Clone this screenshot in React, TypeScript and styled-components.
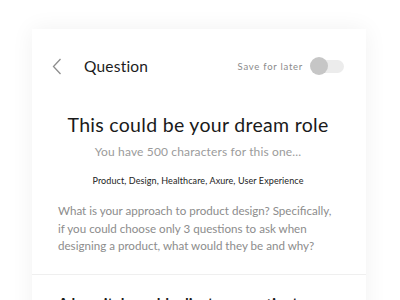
import React, { useState } from 'react';
import styled, { createGlobalStyle } from 'styled-components';

const GlobalStyle = createGlobalStyle`
    body {
        margin: 0;
        background: #ffffff;
        font-family: 'Lato', 'Liberation Sans', sans-serif;
        -webkit-font-smoothing: antialiased;
    }
`;

const Page = styled.div`
    box-sizing: border-box;
    height: 300px;
    overflow: hidden;
    padding: 29px 34px 0 32px;
`;

const Card = styled.div`
    background: #ffffff;
    box-shadow: 0 0 22px rgba(0, 0, 0, 0.06);
    min-height: 320px;
`;

const Header = styled.div`
    align-items: center;
    display: flex;
    height: 22px;
    padding: 26px 22px 0 20px;
`;

const BackButton = styled.button`
    background: transparent;
    border: none;
    cursor: pointer;
    display: flex;
    margin: 0 22px 0 0;
    padding: 0;
`;

const HeaderTitle = styled.h1`
    color: #1c1c1c;
    flex: 1;
    font-size: 15.5px;
    font-weight: 400;
    letter-spacing: 0.2px;
    margin: 0;
`;

const SaveLabel = styled.span`
    color: #8a8a8a;
    font-size: 9.5px;
    letter-spacing: 0.75px;
    margin-right: 7px;
`;

const Switch = styled.button<{ on: boolean }>`
    background: transparent;
    border: none;
    cursor: pointer;
    height: 18px;
    padding: 0;
    position: relative;
    width: 34px;

    &::before {
        background: #ececec;
        border-radius: 7px;
        content: '';
        height: 13px;
        left: 3px;
        position: absolute;
        right: 0;
        top: 2.5px;
    }

    &::after {
        background: ${(p) => (p.on ? '#4caf50' : '#c6c6c6')};
        border-radius: 50%;
        content: '';
        height: 18px;
        left: ${(p) => (p.on ? '16px' : '0')};
        position: absolute;
        top: 0;
        width: 18px;
    }
`;

const Body = styled.div`
    padding: 35px 28px 19px 26px;
    border-bottom: 1px solid #efefef;
`;

const Title = styled.h2`
    color: #1a1a1a;
    font-size: 19.5px;
    font-weight: 400;
    letter-spacing: 0.3px;
    line-height: 26px;
    margin: 0;
    text-align: center;
`;

const Hint = styled.p`
    color: #9b9b9b;
    font-size: 12px;
    letter-spacing: 0.15px;
    line-height: 16px;
    margin: 6px 0 0;
    text-align: center;
`;

const Tags = styled.p`
    color: #222222;
    font-size: 9px;
    letter-spacing: 0.1px;
    line-height: 12px;
    margin: 15px 0 0;
    text-align: center;
`;

const Prompt = styled.p`
    color: #8c8c8c;
    font-size: 11.6px;
    line-height: 17.5px;
    margin: 15px 0 0;
`;

const Next = styled.div`
    padding: 19px 26px;
`;

const NextTitle = styled.h3`
    color: #1a1a1a;
    font-size: 15px;
    font-weight: 700;
    margin: 0;
`;

export default function App() {
    const [saved, setSaved] = useState(false);
    return (
        <Page>
            <GlobalStyle />
            <Card>
                <Header>
                    <BackButton aria-label="Back">
                        <svg width="10" height="17" viewBox="0 0 10 17" fill="none">
                            <path d="M8.5 1 L1.5 8.5 L8.5 16" stroke="#8e8e8e" strokeWidth="1.3" />
                        </svg>
                    </BackButton>
                    <HeaderTitle>Question</HeaderTitle>
                    <SaveLabel>Save for later</SaveLabel>
                    <Switch on={saved} onClick={() => setSaved(!saved)} aria-label="Save for later" />
                </Header>
                <Body>
                    <Title>This could be your dream role</Title>
                    <Hint>You have 500 characters for this one...</Hint>
                    <Tags>Product, Design, Healthcare, Axure, User Experience</Tags>
                    <Prompt>
                        What is your approach to product design? Specifically, if you could choose only 3 questions to
                        ask when designing a product, what would they be and why?
                    </Prompt>
                </Body>
                <Next>
                    <NextTitle>A hospital would adjust your patient</NextTitle>
                </Next>
            </Card>
        </Page>
    );
}
